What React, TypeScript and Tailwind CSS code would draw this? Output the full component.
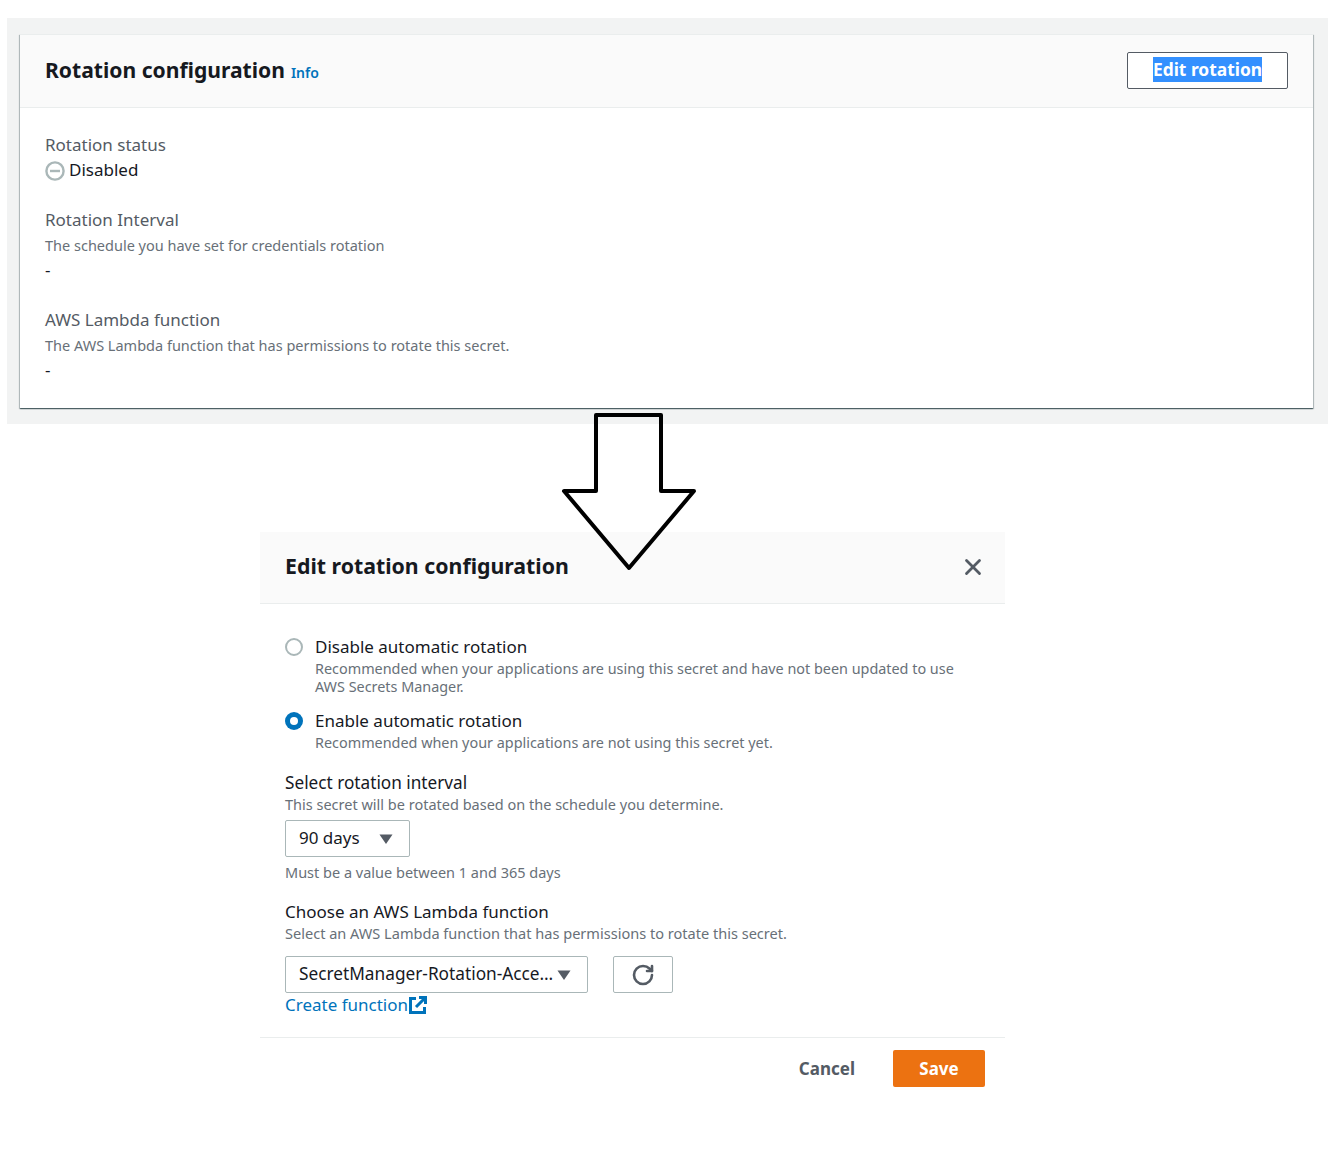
import { X, RotateCw } from 'lucide-react';

function Field({ label, desc, value }: { label: string; desc?: string; value: React.ReactNode }) {
  return (
    <div>
      <div className="text-[17px] leading-[25px] text-[#545b64]">{label}</div>
      {desc && <div className="pt-[1px] text-[14.5px] leading-[25px] text-[#687078]">{desc}</div>}
      <div className="text-[17px] leading-[24px] text-[#16191f]">{value}</div>
    </div>
  );
}

function Radio({ checked, label, desc }: { checked?: boolean; label: string; desc: React.ReactNode }) {
  return (
    <div className="flex gap-[12px]">
      {checked ? (
        <span className="mt-[4px] flex h-[18px] w-[18px] shrink-0 items-center justify-center rounded-full bg-[#0073bb]">
          <span className="h-[8px] w-[8px] rounded-full bg-white" />
        </span>
      ) : (
        <span className="mt-[4px] h-[18px] w-[18px] shrink-0 rounded-full border-2 border-[#aab7b8]" />
      )}
      <div>
        <div className="text-[17px] leading-[26px] text-[#16191f]">{label}</div>
        <div className="text-[14.4px] leading-[18px] text-[#687078]">{desc}</div>
      </div>
    </div>
  );
}

function Caret() {
  return (
    <svg width="14" height="10" viewBox="0 0 14 10" className="shrink-0">
      <path d="M0.5 0.5h13L7 10z" fill="#545b64" />
    </svg>
  );
}

export default function App() {
  return (
    <div className="relative h-[1149px] w-[1343px] overflow-hidden bg-white pt-[18px] font-['Noto_Sans','Liberation_Sans',sans-serif]">
      {/* top panel */}
      <div className="ml-[7px] w-[1321px] bg-[#f2f3f3] px-[13px] pb-[16px] pt-[16px]">
        <div className="h-[374px] w-[1293px] border-t border-[#eaeded] bg-white shadow-[0_1px_1px_0_rgba(0,28,36,0.5),1px_1px_1px_0_rgba(0,28,36,0.2),-1px_1px_1px_0_rgba(0,28,36,0.2)]">
          <div className="flex h-[73px] items-center justify-between border-b border-[#eaeded] bg-[#fafafa] pb-[2px] pl-[25px] pr-[25px]">
            <div className="flex items-baseline gap-[6px]">
              <span className="text-[21.1px] font-bold leading-[28px] text-[#16191f]">Rotation configuration</span>
              <span className="text-[14px] font-semibold text-[#0073bb]">Info</span>
            </div>
            <div className="flex h-[37px] w-[161px] items-center justify-center rounded-[2px] border border-[#545b64] bg-white">
              <span className="mb-[2px] bg-[#3390ff] text-[17.4px] font-bold leading-[25px] text-white">Edit rotation</span>
            </div>
          </div>
          <div className="flex flex-col gap-[25px] pl-[25px] pt-[24px]">
            <Field
              label="Rotation status"
              value={
                <span className="flex h-[25px] items-center gap-[4px]">
                  <svg width="20" height="20" viewBox="0 0 20 20" className="mt-[2px]">
                    <circle cx="10" cy="10" r="8.6" fill="none" stroke="#aab7b8" strokeWidth="2.4" />
                    <path d="M5 10h10" stroke="#aab7b8" strokeWidth="2.4" />
                  </svg>
                  Disabled
                </span>
              }
            />
            <Field label="Rotation Interval" desc="The schedule you have set for credentials rotation" value="-" />
            <Field label="AWS Lambda function" desc="The AWS Lambda function that has permissions to rotate this secret." value="-" />
          </div>
        </div>
      </div>

      {/* modal */}
      <div className="ml-[260px] mt-[108px] w-[745px]">
        <div className="flex h-[72px] items-center justify-between border-b border-[#eaeded] bg-[#fafafa] pb-[4px] pl-[25px] pr-[19px]">
          <span className="text-[21.3px] font-bold leading-[28px] text-[#16191f]">Edit rotation configuration</span>
          <X size={26} strokeWidth={2.6} color="#545b64" className="mt-[2px]" />
        </div>
        <div className="px-[25px] pt-[30px]">
          <div className="flex flex-col gap-[12px]">
            <Radio
              label="Disable automatic rotation"
              desc={
                <>
                  Recommended when your applications are using this secret and have not been updated to use
                  <br />
                  AWS Secrets Manager.
                </>
              }
            />
            <Radio checked label="Enable automatic rotation" desc="Recommended when your applications are not using this secret yet." />
          </div>
          <div className="mt-[19px] text-[17.2px] leading-[24px] text-[#16191f]">Select rotation interval</div>
          <div className="-mt-[1px] text-[14.5px] leading-[20px] text-[#687078]">This secret will be rotated based on the schedule you determine.</div>
          <div className="mt-[6px] flex h-[37px] w-[125px] items-center justify-between rounded-[2px] border border-[#aab7b8] bg-white pb-[2px] pl-[13px] pr-[16px] text-[17px] text-[#16191f]">
            90 days
            <span className="mt-[2px] flex"><Caret /></span>
          </div>
          <div className="mt-[5px] text-[14.5px] leading-[20px] text-[#687078]">Must be a value between 1 and 365 days</div>
          <div className="mt-[18px] text-[17px] leading-[24px] text-[#16191f]">Choose an AWS Lambda function</div>
          <div className="-mt-[1px] text-[14.55px] leading-[20px] text-[#687078]">Select an AWS Lambda function that has permissions to rotate this secret.</div>
          <div className="mt-[13px] flex gap-[25px]">
            <div className="flex h-[37px] w-[303px] items-center justify-between rounded-[2px] border border-[#aab7b8] bg-white pb-[2px] pl-[13px] pr-[16px] text-[17.25px] text-[#16191f]">
              <span>SecretManager-Rotation-Acce…</span>
              <span className="mt-[2px] flex"><Caret /></span>
            </div>
            <div className="flex h-[37px] w-[60px] items-center justify-center rounded-[2px] border border-[#aab7b8] bg-white">
              <RotateCw size={24} strokeWidth={2.6} color="#545b64" />
            </div>
          </div>
          <div className="flex h-[24px] items-center text-[17px] text-[#0073bb]">
            Create function
            <svg width="20" height="20" viewBox="0 0 20 20" fill="none" stroke="#0073bb" strokeWidth="3">
              <path d="M8 3.5H2.5v14h14V12" />
              <path d="M11 2.5h6.5V9M17 3L8 12" />
            </svg>
          </div>
        </div>
        <div className="mt-[20px] flex h-[69px] items-start justify-end gap-[38px] border-t border-[#eaeded] pr-[20px] pt-[12px]">
          <span className="flex h-[37px] items-center text-[17px] font-bold text-[#545b64]">Cancel</span>
          <span className="flex h-[37px] w-[92px] items-center justify-center rounded-[2px] bg-[#ec7211] text-[17px] font-bold text-white">Save</span>
        </div>
      </div>

      {/* arrow drawn over the screenshot */}
      <svg className="absolute left-[555px] top-[408px]" width="150" height="170" viewBox="555 408 150 170" fill="none">
        <path d="M596 415H661V491H694L629 568L564 491H596Z" stroke="#000" strokeWidth="4" strokeLinejoin="round" />
      </svg>
    </div>
  );
}
